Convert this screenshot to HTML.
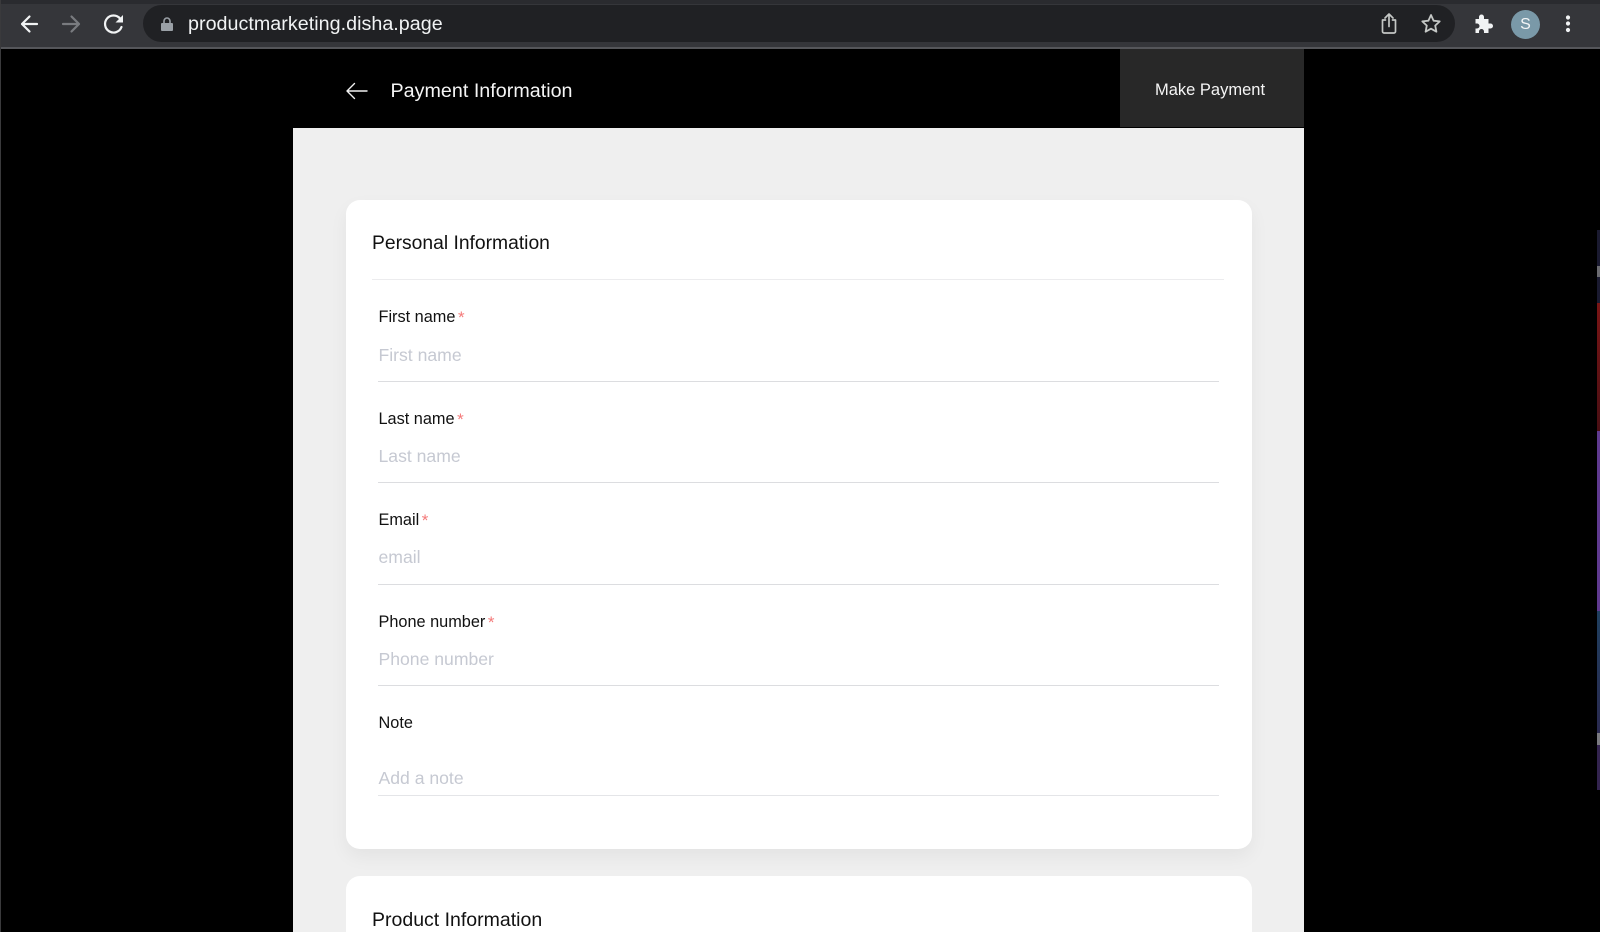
<!DOCTYPE html>
<html><head><meta charset="utf-8"><style>
html,body{margin:0;padding:0;width:1600px;height:932px;overflow:hidden;background:#000;font-family:"Liberation Sans",sans-serif}
#w{position:relative;width:1600px;height:932px;overflow:hidden;background:#000}
.a{position:absolute;white-space:nowrap}
.t{line-height:24px;height:24px}
.lab{font-size:16.300px;color:#111;left:378.500px}
.ph{font-size:17.600px;color:#c6c9d2;left:378.500px}
.ln{left:378px;width:841px;height:1px;background:#dcdde0}
.st{color:#f47a7a;font-size:17px;position:relative;top:1px;margin-left:-2px}
svg{position:absolute;overflow:visible}
</style></head><body><div id="w">
<div class="a" style="left:0;top:0;width:1600px;height:47px;background:#35363a"></div>
<div class="a" style="left:0;top:0;width:1600px;height:4px;background:#2a2b2f"></div>
<div class="a" style="left:0;top:47px;width:1600px;height:2px;background:#55565a"></div>
<div class="a" style="left:0;top:0;width:1px;height:932px;background:#3a3a3c"></div>
<div class="a" style="left:143px;top:5px;width:1312px;height:37px;border-radius:19px;background:#202124"></div>
<svg style="left:0;top:0" width="140" height="47" fill="none" stroke-linecap="round" stroke-linejoin="round">
<path d="M37 24H22M29.500 16.500L22 24l7.500 7.500" stroke="#f1f3f4" stroke-width="2.200"/>
<path d="M63 24H79M71.500 16.500L79 24l-7.500 7.500" stroke="#797b7f" stroke-width="2.200"/>
<path d="M121.500 27a8.500 8.500 0 1 1-1.500-8.500" stroke="#f1f3f4" stroke-width="2.200"/>
<path d="M123 15v7.500h-7.500z" fill="#f1f3f4"/>
</svg>
<svg style="left:160px;top:16px" width="14" height="16"><path d="M2 7h10a1 1 0 0 1 1 1v6a1 1 0 0 1-1 1H2a1 1 0 0 1-1-1V8a1 1 0 0 1 1-1z" fill="#9aa0a6"/><path d="M4 7V5a3 3 0 0 1 6 0v2" fill="none" stroke="#9aa0a6" stroke-width="1.600"/></svg>
<div class="a" style="left:188px;top:12px;font-size:19.700px;line-height:24px;color:#f1f3f4;letter-spacing:.03px">productmarketing.disha.page</div>
<svg style="left:1380px;top:10px" width="220" height="30" fill="none" stroke-linecap="round" stroke-linejoin="round">
<path d="M6 10.500H3v11.500a1.500 1.500 0 0 0 1.500 1.500h10a1.500 1.500 0 0 0 1.500-1.500V10.500h-3" stroke="#c4c7c5" stroke-width="1.700" transform="translate(-.5,-.5)"/>
<path d="M9.500 17V5M5.500 8.500L9.500 4.500l4 4" stroke="#c4c7c5" stroke-width="1.700" transform="translate(-.5,-.5)"/>
<path d="M51 5.500l2.600 5.700 6.100.7-4.500 4.200 1.200 6.100L51 19.200l-5.400 3 1.200-6.100-4.500-4.200 6.100-.7z" stroke="#c4c7c5" stroke-width="1.800" transform="translate(0,-.5)"/>
<path d="M96 12h3.500v-2a2.500 2.500 0 0 1 5 0v2h4.500v4.500h2a2.500 2.500 0 0 1 0 5h-2V26h-4.500v-1.500a2.500 2.500 0 0 0-5 0V26H96v-4.500h1.500a2.500 2.500 0 0 0 0-5H96z" fill="#f1f3f4" transform="translate(-.5,-3)"/>
<circle cx="188" cy="7.500" r="2.100" fill="#f1f3f4"/><circle cx="188" cy="13.500" r="2.100" fill="#f1f3f4"/><circle cx="188" cy="20" r="2.100" fill="#f1f3f4"/>
</svg>
<div class="a" style="left:1511px;top:10px;width:29px;height:29px;border-radius:50%;background:#7a99a8;color:#f4f6f7;font-size:16px;line-height:29px;text-align:center">S</div>

<svg style="left:340px;top:76px" width="30" height="30" fill="none" stroke="#f2f2f2" stroke-width="1.400" stroke-linecap="round" stroke-linejoin="round"><path d="M27 15H7M14.500 7.500L7 15l7.500 7.500"/></svg>
<div class="a t" style="left:390.500px;top:79px;font-size:19.700px;color:#f5f5f5;letter-spacing:.02px">Payment Information</div>
<div class="a" style="left:1120px;top:49px;width:184px;height:78px;background:#282828"></div>
<div class="a t" style="left:1155px;top:78px;font-size:16.500px;color:#f5f5f5">Make Payment</div>

<div class="a" style="left:293px;top:127.500px;width:1011px;height:805px;background:#efefef"></div>
<div class="a" style="left:346px;top:200px;width:906px;height:649px;background:#fff;border-radius:14px;box-shadow:0 8px 18px rgba(0,0,0,.05)"></div>
<div class="a" style="left:346px;top:876px;width:906px;height:56px;background:#fff;border-radius:14px 14px 0 0"></div>

<div class="a t" style="left:372px;top:232px;font-size:19.300px;color:#111">Personal Information</div>
<div class="a" style="left:372px;top:279px;width:852px;height:1px;background:#ececee"></div>

<div class="a t lab" style="top:305px">First name <span class="st">*</span></div>
<div class="a t ph" style="top:342.500px">First name</div>
<div class="a ln" style="top:380.500px"></div>

<div class="a t lab" style="top:406.500px">Last name <span class="st">*</span></div>
<div class="a t ph" style="top:443.500px">Last name</div>
<div class="a ln" style="top:482px"></div>

<div class="a t lab" style="top:507.500px">Email <span class="st">*</span></div>
<div class="a t ph" style="top:545px">email</div>
<div class="a ln" style="top:583.500px"></div>

<div class="a t lab" style="top:609.500px">Phone number <span class="st">*</span></div>
<div class="a t ph" style="top:647px">Phone number</div>
<div class="a ln" style="top:684.500px"></div>

<div class="a t lab" style="top:711px">Note</div>
<div class="a t ph" style="top:765.500px">Add a note</div>
<div class="a ln" style="top:795px;background:#e4e5e8"></div>

<div class="a t" style="left:372px;top:907.500px;font-size:19.500px;color:#111">Product Information</div>

<div class="a" style="left:1597px;top:230px;width:3px;height:73px;background:#1a1a30"></div>
<div class="a" style="left:1597px;top:266px;width:3px;height:11px;background:#6a6a70"></div>
<div class="a" style="left:1597px;top:303px;width:3px;height:128px;background:linear-gradient(#7a1515,#4a0f14)"></div>
<div class="a" style="left:1597px;top:431px;width:3px;height:180px;background:#5f3a8f"></div>
<div class="a" style="left:1597px;top:611px;width:3px;height:122px;background:linear-gradient(#1f3f5f,#2a2a50)"></div>
<div class="a" style="left:1597px;top:733px;width:3px;height:12px;background:#7a7a80"></div>
<div class="a" style="left:1597px;top:745px;width:3px;height:45px;background:#33244f"></div>
</div></body></html>
